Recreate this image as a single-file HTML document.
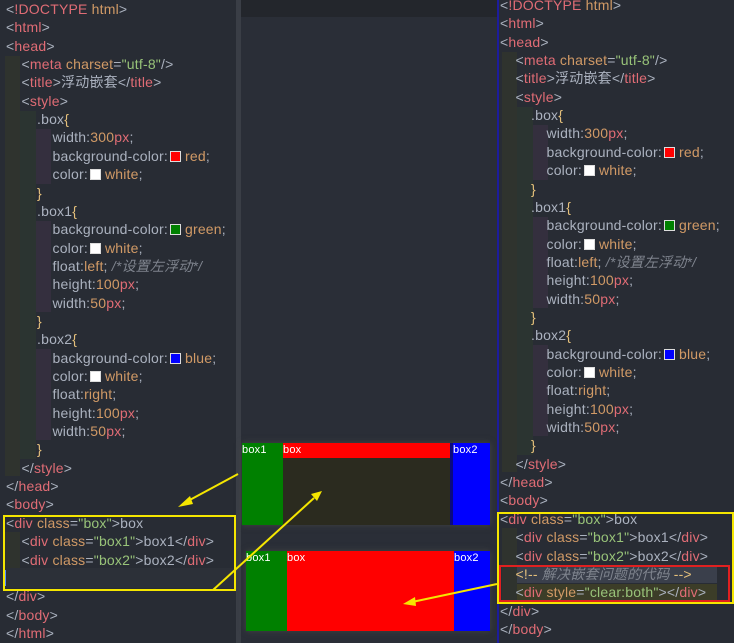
<!DOCTYPE html>
<html><head><meta charset="utf-8"><style>
*{margin:0;padding:0;box-sizing:border-box}
body{width:734px;height:643px;background:#282c34;position:relative;overflow:hidden;font-family:"Liberation Sans","Noto Sans CJK SC",sans-serif;font-size:14px;letter-spacing:0.2px;color:#abb2bf}
.panel{position:absolute;top:0;height:643px;background:#282c34;overflow:hidden}
.l{position:absolute;height:18.35px;line-height:18.35px;white-space:pre}
.t{color:#e06c75}.a{color:#d19a66}.s{color:#98c379}.n{color:#d19a66}.u{color:#e06c75}.b{color:#e5c07b}.c{color:#7f848e;font-style:italic}.p{color:#abb2bf}
.sw{display:inline-block;width:11px;height:11px;border:1px solid #ddd;vertical-align:-1px;margin:0 4px 0 2px}
.g{position:absolute}
</style></head><body>
<div class="panel" style="left:0;width:236px">
<div class="g" style="left:5px;top:56px;width:15px;height:420px;background:#2f332e"></div>
<div class="g" style="left:20px;top:111px;width:16px;height:348px;background:#2b3431"></div>
<div class="g" style="left:36px;top:129px;width:15px;height:55px;background:#342f3e"></div>
<div class="g" style="left:36px;top:221px;width:15px;height:91px;background:#342f3e"></div>
<div class="g" style="left:36px;top:349px;width:15px;height:91px;background:#342f3e"></div>
<div class="g" style="left:5px;top:532px;width:15px;height:36px;background:#2f332e"></div>
<div class="g" style="left:5px;top:568px;width:230px;height:20px;background:#2c3038"></div>
<div class="g" style="left:5px;top:570px;width:1px;height:16px;background:#528bff"></div>
</div>
<div style="position:absolute;left:236px;top:0;width:5px;height:643px;background:#3a3e46"></div>
<div style="position:absolute;left:241px;top:0;width:256px;height:17px;background:#23262c"></div>
<div style="position:absolute;left:241px;top:17px;width:256px;height:626px;background:#2a2e37"></div>
<div class="panel" style="left:497px;width:237px;border-left:2px solid #1c1c9c">
<div class="g" style="left:3px;top:52px;width:15px;height:420px;background:#2f332e"></div>
<div class="g" style="left:18px;top:107px;width:16px;height:348px;background:#2b3431"></div>
<div class="g" style="left:34px;top:125px;width:15px;height:55px;background:#342f3e"></div>
<div class="g" style="left:34px;top:217px;width:15px;height:91px;background:#342f3e"></div>
<div class="g" style="left:34px;top:345px;width:15px;height:91px;background:#342f3e"></div>
<div class="g" style="left:3px;top:528px;width:15px;height:72px;background:#2f332e"></div>
<div class="g" style="left:18px;top:566px;width:200px;height:17px;background:#3a3f4b"></div>
<div class="g" style="left:18px;top:584px;width:200px;height:17px;background:#3c3d28"></div>
</div>
<div id="L"></div>
<script>
function render(x0,y0,lines){var h='';lines.forEach(function(ln,i){h+='<div class="l" style="left:'+(x0+ln[0]*15.5)+'px;top:'+(y0+i*18.35)+'px">'+ln[1]+'</div>';});return h;}
var T=function(s){return '<span class="t">'+s+'</span>'};
var common=[
[0,'&lt;<span class="t">!DOCTYPE</span> <span class="a">html</span>&gt;'],
[0,'&lt;'+T('html')+'&gt;'],
[0,'&lt;'+T('head')+'&gt;'],
[1,'&lt;'+T('meta')+' <span class="a">charset</span>=<span class="s">"utf-8"</span>/&gt;'],
[1,'&lt;'+T('title')+'&gt;浮动嵌套&lt;/'+T('title')+'&gt;'],
[1,'&lt;'+T('style')+'&gt;'],
[2,'.box<span class="b">{</span>'],
[3,'width:<span class="n">300</span><span class="u">px</span>;'],
[3,'background-color:<span class="sw" style="background:red"></span><span class="n">red</span>;'],
[3,'color:<span class="sw" style="background:#fff"></span><span class="n">white</span>;'],
[2,'<span class="b">}</span>'],
[2,'.box1<span class="b">{</span>'],
[3,'background-color:<span class="sw" style="background:green"></span><span class="n">green</span>;'],
[3,'color:<span class="sw" style="background:#fff"></span><span class="n">white</span>;'],
[3,'float:<span class="n">left</span>; <span class="c">/*设置左浮动*/</span>'],
[3,'height:<span class="n">100</span><span class="u">px</span>;'],
[3,'width:<span class="n">50</span><span class="u">px</span>;'],
[2,'<span class="b">}</span>'],
[2,'.box2<span class="b">{</span>'],
[3,'background-color:<span class="sw" style="background:blue"></span><span class="n">blue</span>;'],
[3,'color:<span class="sw" style="background:#fff"></span><span class="n">white</span>;'],
[3,'float:<span class="n">right</span>;'],
[3,'height:<span class="n">100</span><span class="u">px</span>;'],
[3,'width:<span class="n">50</span><span class="u">px</span>;'],
[2,'<span class="b">}</span>'],
[1,'&lt;/'+T('style')+'&gt;'],
[0,'&lt;/'+T('head')+'&gt;'],
[0,'&lt;'+T('body')+'&gt;'],
[0,'&lt;'+T('div')+' <span class="a">class</span>=<span class="s">"box"</span>&gt;box'],
[1,'&lt;'+T('div')+' <span class="a">class</span>=<span class="s">"box1"</span>&gt;box1&lt;/'+T('div')+'&gt;'],
[1,'&lt;'+T('div')+' <span class="a">class</span>=<span class="s">"box2"</span>&gt;box2&lt;/'+T('div')+'&gt;']];
var left=common.concat([[0,''],[0,'&lt;/'+T('div')+'&gt;'],[0,'&lt;/'+T('body')+'&gt;'],[0,'&lt;/'+T('html')+'&gt;']]);
var right=common.concat([[1,'<span class="b">&lt;!--</span> <span class="c">解决嵌套问题的代码</span> <span class="b">--&gt;</span>'],[1,'&lt;'+T('div')+' <span class="a">style</span>=<span class="s">"clear:both"</span>&gt;&lt;/'+T('div')+'&gt;'],[0,'&lt;/'+T('div')+'&gt;'],[0,'&lt;/'+T('body')+'&gt;']]);
document.getElementById('L').innerHTML=render(6,0,left)+render(500,-4,right);
</script>
<div style="position:absolute;left:242px;top:443px;width:248px;height:82px;background:#2b2b1f;box-shadow:0 0 6px #444"></div>
<div style="position:absolute;left:283px;top:443px;width:167px;height:15px;background:red;color:#fff;font-size:11px;line-height:15px">box</div>
<div style="position:absolute;left:242px;top:443px;width:41px;height:82px;background:green;color:#fff;font-size:11px;line-height:15px">box1</div>
<div style="position:absolute;left:450px;top:443px;width:40px;height:82px;background:blue;border-left:3px solid #0a0a80;color:#fff;font-size:11px;line-height:15px;padding-left:0">box2</div>
<div style="position:absolute;left:246px;top:551px;width:244px;height:80px;background:red;box-shadow:0 0 6px #444"></div>
<div style="position:absolute;left:287px;top:551px;color:#fff;font-size:11px;line-height:15px">box</div>
<div style="position:absolute;left:246px;top:551px;width:41px;height:80px;background:green;color:#fff;font-size:11px;line-height:15px">box1</div>
<div style="position:absolute;left:454px;top:551px;width:36px;height:80px;background:blue;color:#fff;font-size:11px;line-height:15px">box2</div>
<div style="position:absolute;left:3px;top:515px;width:233px;height:76px;border:2px solid #f5e600"></div>
<div style="position:absolute;left:497px;top:512px;width:237px;height:92px;border:2px solid #f5e600"></div>
<div style="position:absolute;left:499px;top:565px;width:231px;height:37px;border:2px solid #e02020"></div>
<svg style="position:absolute;left:0;top:0" width="734" height="643">
<g stroke="#f5e600" stroke-width="2" fill="#f5e600">
<line x1="238" y1="474" x2="186" y2="502"/><polygon points="178,507 190,496 193,504" stroke="none"/>
<line x1="213" y1="590" x2="314" y2="498"/><polygon points="322,491 311,494 317,501" stroke="none"/>
<line x1="497" y1="584" x2="412" y2="602"/><polygon points="403,604 415,597 416,606" stroke="none"/>
</g></svg>
</body></html>
